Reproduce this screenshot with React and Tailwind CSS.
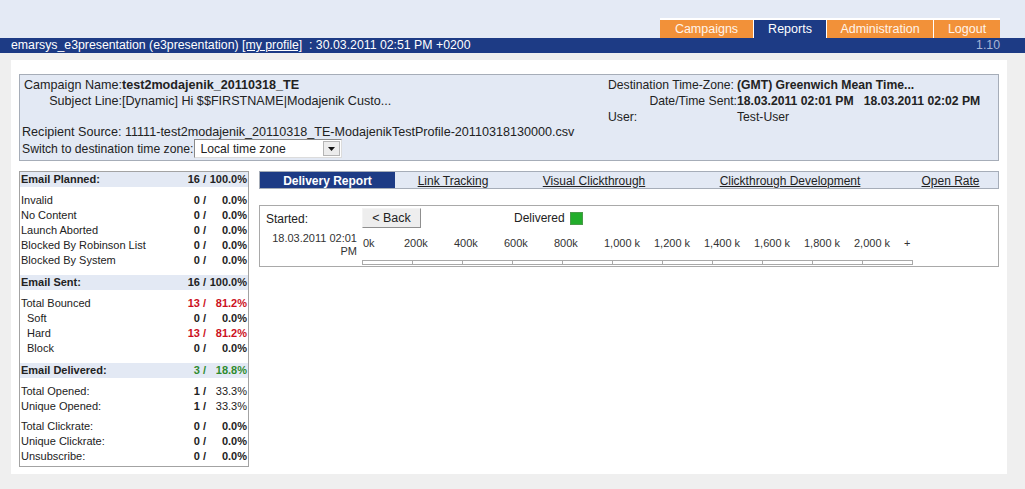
import React from 'react';

const groups = [
  {
    title: 'Email Planned:', count: '16', pct: '100.0%',
    rows: [
      ['Invalid', '0', '0.0%'],
      ['No Content', '0', '0.0%'],
      ['Launch Aborted', '0', '0.0%'],
      ['Blocked By Robinson List', '0', '0.0%'],
      ['Blocked By System', '0', '0.0%'],
    ],
  },
  {
    title: 'Email Sent:', count: '16', pct: '100.0%',
    rows: [
      ['Total Bounced', '13', '81.2%', 'red'],
      ['Soft', '0', '0.0%', '', true],
      ['Hard', '13', '81.2%', 'red', true],
      ['Block', '0', '0.0%', '', true],
    ],
  },
  {
    title: 'Email Delivered:', count: '3', pct: '18.8%', green: true,
    rows: [
      ['Total Opened:', '1', '33.3%', 'thin'],
      ['Unique Opened:', '1', '33.3%', 'thin'],
    ],
  },
  {
    rows: [
      ['Total Clickrate:', '0', '0.0%'],
      ['Unique Clickrate:', '0', '0.0%'],
      ['Unsubscribe:', '0', '0.0%'],
    ],
  },
];

const axis = ['200k', '400k', '600k', '800k', '1,000 k', '1,200 k', '1,400 k', '1,600 k', '1,800 k', '2,000 k', '+'];

function StatRow({ label, count, pct, tone, indent }) {
  const red = tone === 'red';
  return (
    <div className="flex h-[15px] items-center text-[11px] text-[#222]">
      <div className={indent ? 'flex-1 pl-[7px]' : 'flex-1 pl-[1px]'}>{label}</div>
      <div className={red ? 'w-[48px] text-right font-bold text-[#cc1122]' : 'w-[48px] text-right font-bold'}>{count} /</div>
      <div className={red ? 'w-[42px] pr-[1px] text-right font-bold text-[#cc1122]' : tone === 'thin' ? 'w-[42px] pr-[1px] text-right' : 'w-[42px] pr-[1px] text-right font-bold'}>{pct}</div>
    </div>
  );
}

function StatsTable() {
  return (
    <div className="flex w-[230px] flex-col border border-[#a3a3a3] pb-[2px]">
      {groups.map((g, i) => (
        <div key={i} className={i === 0 ? '' : g.title ? 'mt-[7px]' : 'mt-[5px]'}>
          {g.title && (
            <div className="flex h-[15px] items-center bg-[#e3e9f4] text-[11px] font-bold text-[#222]">
              <div className="flex-1 pl-[1px]">{g.title}</div>
              <div className={g.green ? 'w-[48px] text-right text-[#2e8b2e]' : 'w-[48px] text-right'}>{g.count} /</div>
              <div className={g.green ? 'w-[42px] pr-[1px] text-right text-[#2e8b2e]' : 'w-[42px] pr-[1px] text-right'}>{g.pct}</div>
            </div>
          )}
          <div className={g.title ? 'mt-[6px]' : ''}>
            {g.rows.map((r) => (
              <StatRow key={r[0]} label={r[0]} count={r[1]} pct={r[2]} tone={r[3]} indent={r[4]} />
            ))}
          </div>
        </div>
      ))}
    </div>
  );
}

export default function App() {
  return (
    <div className="min-h-[489px] bg-[#efefef] font-['Liberation_Sans',Arial,sans-serif] text-[#222]">
      {/* header */}
      <div className="flex h-[38px] items-end justify-end bg-[#e4eaf5] pr-[25px]">
        <div className="flex h-[20px] gap-[1px] bg-white pt-[2px] text-[12.5px]">
          <div className="flex w-[93px] items-center justify-center bg-[#f29139] text-[#fff4ea]">Campaigns</div>
          <div className="flex w-[72px] items-center justify-center bg-[#1d3b85] text-white">Reports</div>
          <div className="flex w-[106px] items-center justify-center bg-[#f29139] text-[#fff4ea]">Administration</div>
          <div className="flex w-[66px] items-center justify-center bg-[#f29139] text-[#fff4ea]">Logout</div>
        </div>
      </div>
      <div className="flex h-[15px] items-center justify-between bg-[#1d3b85] pl-[11px] pr-[25px] text-[12.3px] text-white">
        <div>
          emarsys_e3presentation (e3presentation) <span className="underline">[my profile]</span>&nbsp; : 30.03.2011 02:51 PM +0200
        </div>
        <div className="text-[#a9b6d6]">1.10</div>
      </div>

      {/* content panel */}
      <div className="ml-[11px] mr-[18px] mt-[7px] bg-white px-[8px] pb-[7px] pt-[14px]">
        <div className="flex h-[87px] border border-[#a6adb8] bg-[#e3e9f4] pt-[2px] text-[12px] leading-[16px]">
          <div className="w-[588px] pl-[2px] text-[12.6px]">
            <div className="grid grid-cols-[100px_1fr]">
              <div className="whitespace-nowrap text-right">Campaign Name:</div>
              <div className="font-bold">test2modajenik_20110318_TE</div>
              <div className="text-right">Subject Line:</div>
              <div>[Dynamic] Hi $$FIRSTNAME|Modajenik Custo...</div>
            </div>
            <div className="mt-[15px]">Recipient Source: 11111-test2modajenik_20110318_TE-ModajenikTestProfile-20110318130000.csv</div>
            <div className="-mt-[1px] flex items-center text-[12.2px]">
              <span>Switch to destination time zone:</span>
              <div className="ml-[1px] flex h-[19px] w-[148px] items-center justify-between border border-t-[#8a8a8a] border-l-[#8a8a8a] border-r-[#dcdcdc] border-b-[#dcdcdc] bg-white pl-[5px] pr-[1px]">
                <span>Local time zone</span>
                <div className="flex h-[15px] w-[17px] items-center justify-center border border-[#b5b5b5] bg-[#ececec]">
                  <svg width="7" height="4" viewBox="0 0 7 4"><path d="M0 0h7L3.5 4z" fill="#111" /></svg>
                </div>
              </div>
            </div>
          </div>
          <div className="grid h-fit grid-cols-[129px_auto] text-[12.2px]">
            <div className="whitespace-nowrap">Destination Time-Zone:</div>
            <div className="font-bold">(GMT) Greenwich Mean Time...</div>
            <div className="text-right">Date/Time Sent:</div>
            <div className="font-bold">18.03.2011 02:01 PM&nbsp;&nbsp; 18.03.2011 02:02 PM</div>
            <div>User:</div>
            <div>Test-User</div>
          </div>
        </div>

        <div className="mt-[10px] flex gap-[10px]">
          <StatsTable />

          <div className="flex w-[740px] flex-col">
            <div className="flex h-[18px] border border-[#a6adb8] bg-[#e3e9f4] pt-[1px] text-[12px]">
              <div className="-mt-[1px] flex w-[135px] items-center justify-center bg-[#1d3b85] pt-[1px] font-bold text-white">Delivery Report</div>
              <div className="flex w-[116px] items-center justify-center underline">Link Tracking</div>
              <div className="flex w-[166px] items-center justify-center underline">Visual Clickthrough</div>
              <div className="flex w-[226px] items-center justify-center underline">Clickthrough Development</div>
              <div className="flex flex-1 items-center justify-center underline">Open Rate</div>
            </div>

            <div className="mt-[16px] flex h-[62px] border border-[#a9a9a9] bg-white">
              <div className="flex w-[97px] flex-col pl-[6px] pt-[5px]">
                <div className="text-[12px] leading-[16px]">Started:</div>
                <div className="mt-[5px] text-right text-[11px] leading-[13px] text-[#333]">
                  18.03.2011 02:01<br />PM
                </div>
              </div>
              <div className="ml-[5px] flex flex-col pt-[2px]">
                <div className="flex h-[20px] items-center">
                  <div className="flex h-[20px] w-[59px] items-center justify-center border border-t-[#f4f4f4] border-l-[#f4f4f4] border-r-[#8f8f8f] border-b-[#8f8f8f] bg-[#eeeeee] text-[12.5px] leading-none">&lt; Back</div>
                  <span className="ml-[93px] text-[12px]">Delivered</span>
                  <div className="ml-[5px] h-[13px] w-[13px] border border-[#4a9a4a] bg-[#22ad2b]"></div>
                </div>
                <div className="mt-[8px] flex h-[14px] items-center text-[11px] text-[#333]">
                  <div className="w-[42px] pl-[1px]">0k</div>
                  {axis.map((a) => (
                    <div key={a} className="w-[50px]">{a}</div>
                  ))}
                </div>
                <div className="mt-[10px] flex h-[5px] w-[551px] border border-[#a9a9a9]">
                  {Array.from({ length: 11 }).map((_, i) => (
                    <div key={i} className={i === 10 ? 'flex-1' : 'w-[50px] border-r border-[#a9a9a9]'}></div>
                  ))}
                </div>
              </div>
            </div>
          </div>
        </div>
      </div>
    </div>
  );
}
